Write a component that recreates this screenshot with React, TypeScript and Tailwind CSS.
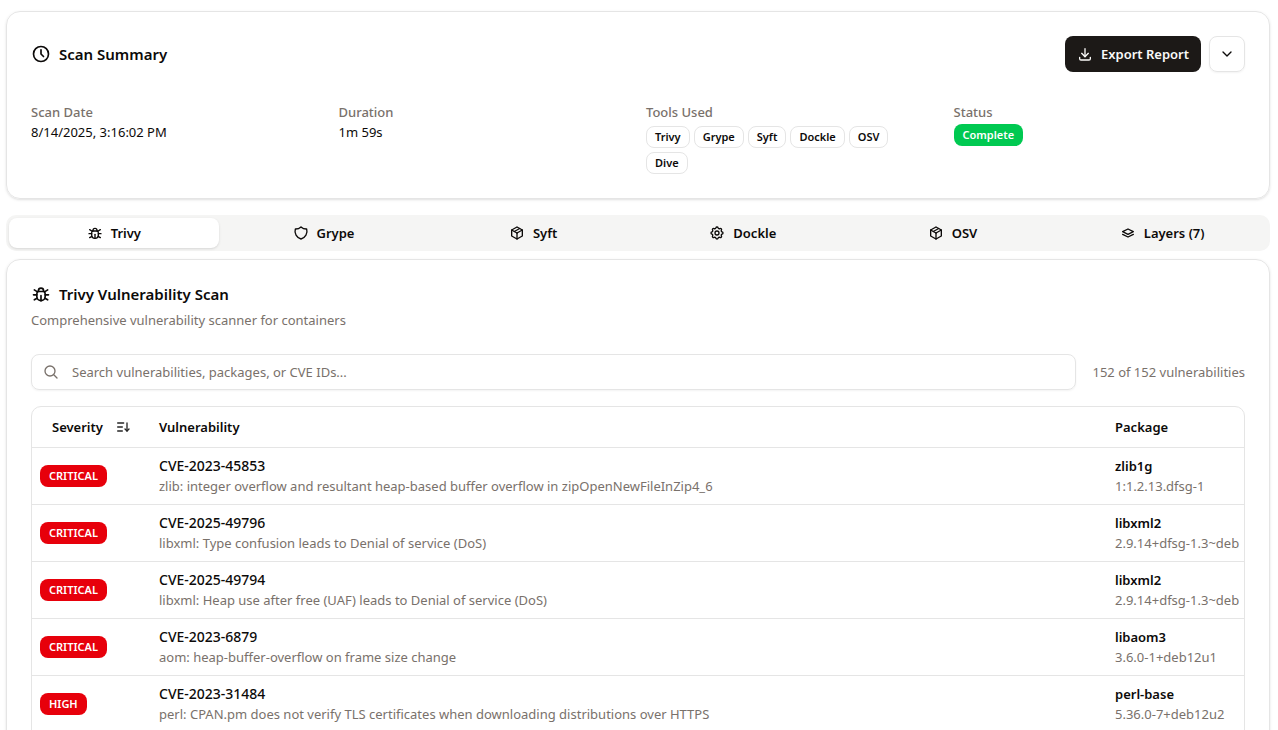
import React from 'react';
import { HiOutlineMagnifyingGlass } from 'react-icons/hi2';
import {
  TbBug,
  TbChevronDown,
  TbClock,
  TbDownload,
  TbPackage,
  TbSettings,
  TbShield,
  TbSortDescending,
  TbStack,
} from 'react-icons/tb';

const tools = ['Trivy', 'Grype', 'Syft', 'Dockle', 'OSV', 'Dive'];

const tabs = [
  { label: 'Trivy', icon: TbBug },
  { label: 'Grype', icon: TbShield },
  { label: 'Syft', icon: TbPackage },
  { label: 'Dockle', icon: TbSettings },
  { label: 'OSV', icon: TbPackage },
  { label: 'Layers (7)', icon: TbStack },
];

const findings = [
  {
    severity: 'CRITICAL',
    id: 'CVE-2023-45853',
    title: 'zlib: integer overflow and resultant heap-based buffer overflow in zipOpenNewFileInZip4_6',
    pkg: 'zlib1g',
    version: '1:1.2.13.dfsg-1',
  },
  {
    severity: 'CRITICAL',
    id: 'CVE-2025-49796',
    title: 'libxml: Type confusion leads to Denial of service (DoS)',
    pkg: 'libxml2',
    version: '2.9.14+dfsg-1.3~deb',
  },
  {
    severity: 'CRITICAL',
    id: 'CVE-2025-49794',
    title: 'libxml: Heap use after free (UAF) leads to Denial of service (DoS)',
    pkg: 'libxml2',
    version: '2.9.14+dfsg-1.3~deb',
  },
  {
    severity: 'CRITICAL',
    id: 'CVE-2023-6879',
    title: 'aom: heap-buffer-overflow on frame size change',
    pkg: 'libaom3',
    version: '3.6.0-1+deb12u1',
  },
  {
    severity: 'HIGH',
    id: 'CVE-2023-31484',
    title: 'perl: CPAN.pm does not verify TLS certificates when downloading distributions over HTTPS',
    pkg: 'perl-base',
    version: '5.36.0-7+deb12u2',
  },
];

const Badge: React.FC<{ className: string; children: React.ReactNode }> = ({ className, children }) => (
  <span className={`inline-flex h-[22px] items-center rounded-lg border px-2 text-[11px] leading-4 ${className}`}>
    {children}
  </span>
);

const ScanSummary: React.FC = () => (
  <section className="rounded-[14px] border border-neutral-200 p-6 shadow-sm">
    <div className="flex items-center justify-between">
      <h2 className="flex items-center gap-2 text-[15px] leading-5 font-semibold">
        <TbClock className="size-5" />
        Scan Summary
      </h2>
      <div className="flex items-center gap-2">
        <button
          type="button"
          className="flex h-9 items-center gap-2 rounded-lg bg-stone-900 px-3 font-semibold text-stone-50"
        >
          <TbDownload className="size-4" />
          Export Report
        </button>
        <button
          type="button"
          aria-label="More export options"
          className="flex size-9 items-center justify-center rounded-lg border border-neutral-200 shadow-xs"
        >
          <TbChevronDown className="size-4" />
        </button>
      </div>
    </div>

    <dl className="mt-[30px] grid grid-cols-4 gap-4">
      <div>
        <dt className="font-medium text-stone-500">Scan Date</dt>
        <dd>8/14/2025, 3:16:02 PM</dd>
      </div>
      <div>
        <dt className="font-medium text-stone-500">Duration</dt>
        <dd>1m 59s</dd>
      </div>
      <div>
        <dt className="font-medium text-stone-500">Tools Used</dt>
        <dd className="mt-1 flex flex-wrap gap-1 pr-6">
          {tools.map((tool) => (
            <Badge key={tool} className="border-neutral-200 font-semibold">{tool}</Badge>
          ))}
        </dd>
      </div>
      <div>
        <dt className="font-medium text-stone-500">Status</dt>
        <dd className="mt-0.5 flex">
          <Badge className="border-transparent bg-green-500 font-semibold text-white">Complete</Badge>
        </dd>
      </div>
    </dl>
  </section>
);

const ToolTabs: React.FC = () => (
  <div role="tablist" className="mt-4 grid h-9 grid-cols-6 rounded-[10px] bg-stone-100 p-[3px]">
    {tabs.map(({ label, icon: Icon }, i) => (
      <button
        key={label}
        type="button"
        role="tab"
        aria-selected={i === 0}
        className={`flex items-center justify-center gap-2 rounded-lg font-semibold ${i === 0 ? 'bg-white shadow-sm' : ''}`}
      >
        <Icon className="size-4" />
        {label}
      </button>
    ))}
  </div>
);

const FindingsTable: React.FC = () => (
  <div className="mt-4 overflow-hidden rounded-t-[10px] border border-neutral-200">
    <table className="w-full table-fixed text-left whitespace-nowrap">
      <thead>
        <tr className="h-10 border-b border-neutral-200">
          <th scope="col" className="w-[119px] pl-5 font-semibold">
            <button type="button" className="flex items-center gap-3 font-semibold">
              Severity
              <TbSortDescending className="size-4 text-neutral-800" />
            </button>
          </th>
          <th scope="col" className="px-2 font-semibold">Vulnerability</th>
          <th scope="col" className="w-[137px] px-2 font-semibold">Package</th>
        </tr>
      </thead>
      <tbody>
        {findings.map((f) => (
          <tr key={f.id} className="border-b border-neutral-200">
            <td className="p-2">
              <Badge className="border-transparent bg-red-600 font-semibold text-white">{f.severity}</Badge>
            </td>
            <td className="p-2">
              <div className="text-sm leading-5 font-medium">{f.id}</div>
              <div className="text-stone-500">{f.title}</div>
            </td>
            <td className="p-2">
              <div className="font-semibold">{f.pkg}</div>
              <div className="text-stone-500">{f.version}</div>
            </td>
          </tr>
        ))}
      </tbody>
    </table>
  </div>
);

const TrivyPanel: React.FC = () => (
  <section role="tabpanel" className="mt-2 rounded-[14px] border border-neutral-200 p-6 shadow-sm">
    <h2 className="flex items-center gap-2 text-[15px] leading-5 font-semibold">
      <TbBug className="size-5" />
      Trivy Vulnerability Scan
    </h2>
    <p className="mt-1.5 text-stone-500">Comprehensive vulnerability scanner for containers</p>

    <div className="mt-6 flex items-center gap-4">
      <div className="relative flex-1">
        <HiOutlineMagnifyingGlass className="absolute top-2.5 left-3 size-4 stroke-2 text-stone-500" />
        <input
          type="text"
          aria-label="Search vulnerabilities"
          placeholder="Search vulnerabilities, packages, or CVE IDs..."
          className="h-9 w-full rounded-lg border border-neutral-200 pr-3 pl-10 shadow-xs outline-none placeholder:text-stone-500"
        />
      </div>
      <span className="text-stone-500">152 of 152 vulnerabilities</span>
    </div>

    <FindingsTable />
  </section>
);

export default function App() {
  return (
    <main className="h-screen overflow-hidden bg-white pt-[11px] pr-2 pl-1.5 font-['Noto_Sans',sans-serif] text-[13px] leading-5 text-stone-950">
      <ScanSummary />
      <ToolTabs />
      <TrivyPanel />
    </main>
  );
}
